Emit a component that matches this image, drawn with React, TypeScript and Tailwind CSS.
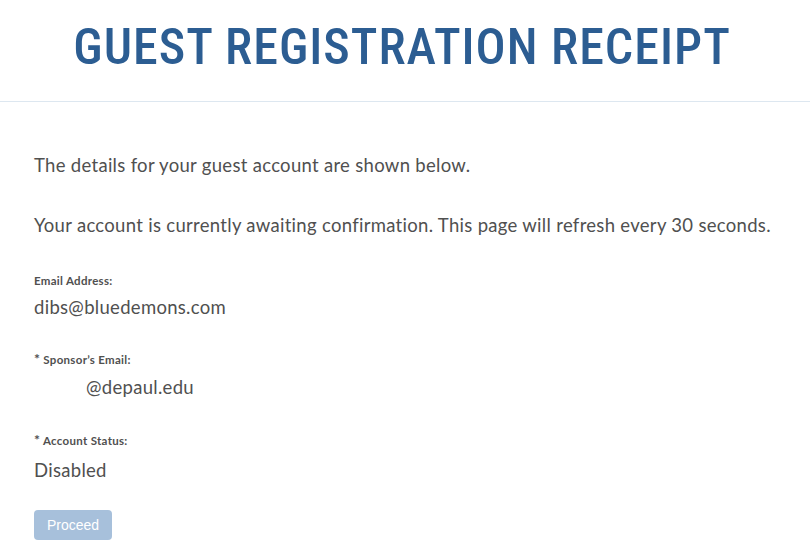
import React from "react";

export default function App() {
  return (
    <div className="w-[810px] h-[554px] bg-white overflow-hidden">
      <header className="h-[102px] border-b border-[#dde7f0] flex justify-center">
        <h1
          className="mt-[18px] mr-[6px] text-[50px] leading-[58px] text-[#2c5d92] tracking-[1px] font-medium"
          style={{ fontFamily: '"Liberation Sans Narrow", "Roboto Condensed", Roboto, sans-serif' }}
        >
          GUEST REGISTRATION RECEIPT
        </h1>
      </header>
      <main
        className="px-[34px] pt-[50px] text-[#505050] tracking-[0.3px]"
        style={{ fontFamily: 'Lato, "Noto Sans", sans-serif' }}
      >
        <p className="text-[18.5px] leading-[26px]">The details for your guest account are shown below.</p>
        <p className="mt-[34px] text-[18.5px] leading-[26px]">
          Your account is currently awaiting confirmation. This page will refresh every 30 seconds.
        </p>
        <div className="mt-[36px]">
          <div className="text-[11.5px] font-bold leading-[14px]">Email Address:</div>
          <div className="mt-[6px] text-[18.5px] leading-[26px]">dibs@bluedemons.com</div>
        </div>
        <div className="mt-[32px]">
          <div className="text-[11.5px] font-bold leading-[14px]">
            <span className="text-[14px]">*</span> Sponsor’s Email:
          </div>
          <div className="mt-[7px] text-[18.5px] leading-[26px] pl-[52px]">@depaul.edu</div>
        </div>
        <div className="mt-[33px]">
          <div className="text-[11.5px] font-bold leading-[14px]">
            <span className="text-[14px]">*</span> Account Status:
          </div>
          <div className="mt-[9px] text-[18.5px] leading-[26px]">Disabled</div>
        </div>
        <button
          className="mt-[27px] w-[78px] h-[30px] rounded-[4px] bg-[#a7c0db] text-white text-[14px] tracking-normal"
          style={{ fontFamily: '"Liberation Sans", Arial, sans-serif' }}
        >
          Proceed
        </button>
      </main>
    </div>
  );
}
